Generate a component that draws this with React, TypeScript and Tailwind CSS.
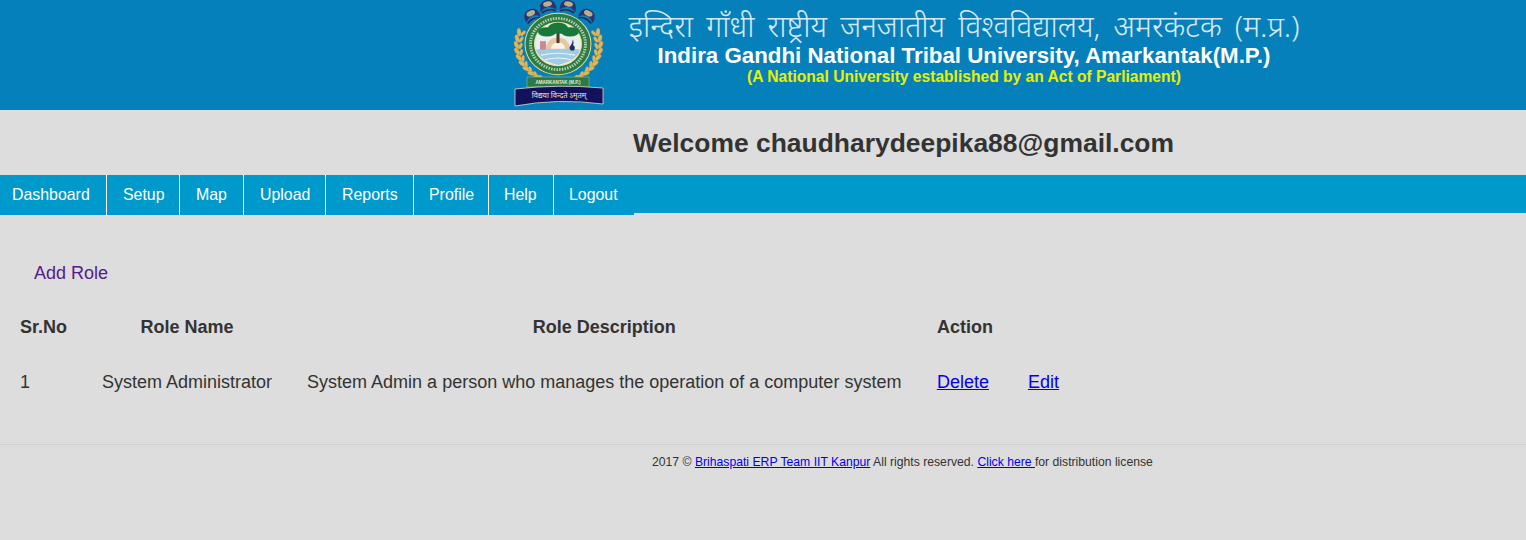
const navItems = [
  { label: 'Dashboard', width: 'w-[107px] pl-3' },
  { label: 'Setup', width: 'w-[73px] pl-4' },
  { label: 'Map', width: 'w-[64px] pl-4' },
  { label: 'Upload', width: 'w-[82px] pl-4' },
  { label: 'Reports', width: 'w-[88px] pl-4' },
  { label: 'Profile', width: 'w-[75px] pl-[15px]' },
  { label: 'Help', width: 'w-[65px] pl-[15px]' },
  { label: 'Logout', width: 'w-[80px] pl-[15px]' },
];

const crowns = [
  { x: 19, y: 16, r: -25 },
  { x: 35, y: 7, r: -10 },
  { x: 55, y: 7, r: 10 },
  { x: 74, y: 16, r: 25 },
];

const grains = [0, 1, 2, 3, 4, 5, 6, 7, 8];

function Logo() {
  return (
    <svg width="92" height="108" viewBox="0 0 92 108" className="shrink-0">
      {/* crown */}
      {crowns.map((c) => (
        <g key={c.x} transform={`translate(${c.x} ${c.y}) rotate(${c.r})`}>
          <path d="M-8 4 Q-9 -7 0 -7 Q9 -7 8 4 Q4 0 0 0 Q-4 0 -8 4Z" fill="#2b3470" />
          <ellipse cx="0" cy="-3" rx="4.5" ry="2.6" fill="#b9b08a" />
          <path d="M-7 5 Q0 1 7 5" stroke="#26264f" strokeWidth="1.6" fill="none" />
        </g>
      ))}
      {/* wheat */}
      {grains.map((i) => {
        const angle = 160 + i * 10;
        const a = (Math.PI * angle) / 180;
        const lx = 45.5 + Math.cos(a) * 42;
        const ly = 45 - Math.sin(a) * 37;
        const rx = 91 - lx;
        const deg = 180 - angle;
        return (
          <g key={i} fill="#dcb75f" stroke="#b98a32" strokeWidth="0.3">
            <ellipse cx={lx} cy={ly} rx="2" ry="4" transform={`rotate(${deg - 25} ${lx} ${ly})`} />
            <ellipse cx={lx + 4} cy={ly + 1} rx="1.6" ry="3.4" transform={`rotate(${deg + 25} ${lx + 4} ${ly + 1})`} />
            <ellipse cx={rx} cy={ly} rx="2" ry="4" transform={`rotate(${-deg + 25} ${rx} ${ly})`} />
            <ellipse cx={rx - 4} cy={ly + 1} rx="1.6" ry="3.4" transform={`rotate(${-deg - 25} ${rx - 4} ${ly + 1})`} />
          </g>
        );
      })}
      {/* seal */}
      <g transform="translate(45 44) scale(1 0.93) translate(-45 -42)">
        <circle cx="45" cy="42" r="33.5" fill="#e9d98a" />
        <circle cx="45" cy="42" r="32.5" fill="#2c7a45" />
        <circle cx="45" cy="42" r="27.5" fill="none" stroke="#b7d3ae" strokeWidth="3" strokeDasharray="1.5 1.2" />
        <circle cx="45" cy="42" r="24" fill="#f1e6a8" />
        <circle cx="45" cy="42" r="22.5" fill="#e9eef2" />
        <path d="M23 48 Q45 44 67 48 Q64 60 45 64.5 Q26 60 23 48Z" fill="#9fcbe4" />
        <path d="M28 54 Q45 50 62 54 M32 59 Q45 55 58 59" stroke="#eaf3f8" strokeWidth="1.2" fill="none" />
        <path d="M33 47 a12 12 0 0 1 24 0z" fill="#e9c5a0" />
        <path d="M38 47 a7 7 0 0 1 14 0z" fill="#f7f3ea" />
        <rect x="43.5" y="28" width="3" height="13" fill="#4a3a2a" />
        <ellipse cx="34" cy="29" rx="9" ry="5" fill="#17783a" />
        <ellipse cx="45" cy="25" rx="10" ry="6" fill="#17783a" />
        <ellipse cx="57" cy="29" rx="9" ry="5" fill="#17783a" />
        <path d="M27 39 h6 v9 h-6z" fill="#c98a92" />
        <path d="M60 37 q-1 5 -2 6 q-3 3 0 6 h3 q2 -4 -1 -6 q1 -2 0 -6z" fill="#1f2d66" />
      </g>
      {/* plaque */}
      <rect x="14" y="77" width="62" height="10" fill="#2c7a45" stroke="#8fb78f" strokeWidth="0.6" />
      <text x="45" y="84" textAnchor="middle" fontSize="4.5" fontWeight="700" fill="#e4ecdf" fontFamily="'Liberation Sans', sans-serif">
        AMARKANTAK (M.P.)
      </text>
      {/* ribbon */}
      <path d="M2 89 Q45 84 90 88 L90 104 Q45 98 2 106Z" fill="#14115c" stroke="#d9d9cf" strokeWidth="0.8" />
      <text x="46" y="98" textAnchor="middle" fontSize="7.5" fill="#e6e6e6" fontFamily="'Noto Sans', sans-serif">
        विद्यया विन्दते ऽमृतम्
      </text>
    </svg>
  );
}

export default function App() {
  return (
    <div className="min-h-[540px] bg-[#ddd] font-['Liberation_Sans',Arial,sans-serif] text-[#333]">
      <header className="flex h-[110px] items-start overflow-hidden bg-[#0680bb] pl-[513px]">
        <Logo />
        <div className="ml-[23px] w-[672px] pt-[7px] text-center">
          <div className="font-['Noto_Sans','Noto_Sans_Devanagari','Lohit_Devanagari',sans-serif] text-[30px] leading-[37px] font-light [word-spacing:5.3px] whitespace-nowrap text-[#d5e8f2]">
            इन्दिरा गाँधी राष्ट्रीय जनजातीय विश्वविद्यालय, अमरकंटक (म.प्र.)
          </div>
          <div className="text-[22.3px] leading-[24px] font-bold whitespace-nowrap text-white">
            Indira Gandhi National Tribal University, Amarkantak(M.P.)
          </div>
          <div className="text-[15.6px] leading-[18px] font-bold whitespace-nowrap text-[#e6f000]">
            (A National University established by an Act of Parliament)
          </div>
        </div>
      </header>

      <div className="flex h-[65px] items-center pt-[2px] pl-[633px]">
        <h1 className="text-[26.45px] font-bold">Welcome chaudharydeepika88@gmail.com</h1>
      </div>

      <nav className="flex h-[38px] bg-[#0099cc]">
        {navItems.map((item, i) => (
          <a
            key={item.label}
            href="#"
            className={`flex h-10 items-center bg-[#0099cc] text-[15.9px] text-white ${item.width} ${i < navItems.length - 1 ? 'border-r border-white' : ''}`}
          >
            {item.label}
          </a>
        ))}
      </nav>

      <main className="pt-[46px]">
        <a href="#" className="ml-[34px] block text-lg leading-[28px] text-[#551a8b]">
          Add Role
        </a>
        <table className="mt-[13px] ml-[2.5px] border-collapse text-lg">
          <thead>
            <tr className="h-[54px]">
              <th className="px-[17.5px] font-bold">Sr.No</th>
              <th className="px-[17.5px] font-bold">Role Name</th>
              <th className="px-[17.5px] font-bold">Role Description</th>
              <th colSpan={2} className="px-[18px] text-left font-bold">Action</th>
            </tr>
          </thead>
          <tbody>
            <tr className="h-[56px]">
              <td className="px-[17.5px]">1</td>
              <td className="px-[17.5px]">System Administrator</td>
              <td className="px-[17.5px]">System Admin a person who manages the operation of a computer system</td>
              <td className="px-[18px]">
                <a href="#" className="text-[#0000ee] underline">Delete</a>
              </td>
              <td className="px-[21px]">
                <a href="#" className="text-[#0000ee] underline">Edit</a>
              </td>
            </tr>
          </tbody>
        </table>
      </main>

      <footer className="mt-[34px] border-t border-[#d0d0d0] pt-[10px] pl-[652px] text-[12.2px] leading-[14px]">
        2017 © <a href="#" className="text-[#0000ee] underline">Brihaspati ERP Team IIT Kanpur</a> All rights reserved.{' '}
        <a href="#" className="text-[#0000ee] underline">Click here </a>for distribution license
      </footer>
    </div>
  );
}
